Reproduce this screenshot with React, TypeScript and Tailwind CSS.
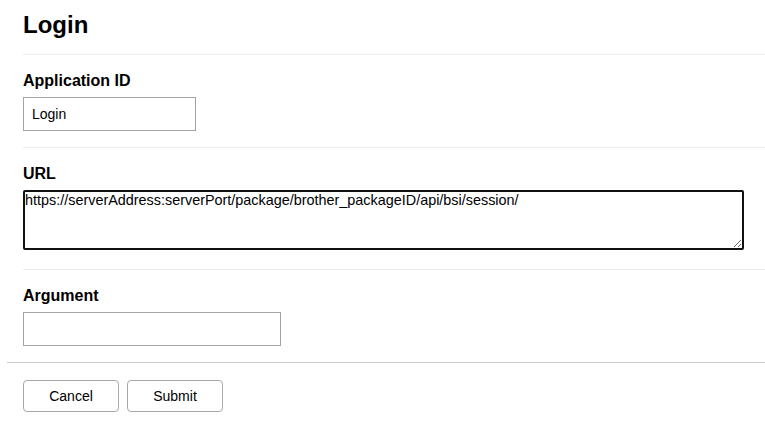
const font = { fontFamily: '"Liberation Sans", Arial, sans-serif' };

function Field({ label, children }: { label: string; children: React.ReactNode }) {
  return (
    <section className="border-t border-[#ececec] pt-4 pb-4">
      <h2 className="text-base font-bold leading-5 text-black">{label}</h2>
      <div className="mt-[6px]">{children}</div>
    </section>
  );
}

export default function App() {
  return (
    <main className="min-h-screen bg-white text-black" style={font}>
      <div className="pl-[23px]">
        <h1 className="pt-[11px] text-2xl font-bold leading-7">Login</h1>
        <div className="mt-[15px]">
          <Field label="Application ID">
            <input
              defaultValue="Login"
              className="block h-[34px] w-[173px] border border-[#a3a3a3] bg-white px-2 text-sm text-black outline-none"
              style={font}
            />
          </Field>
          <section className="border-t border-[#ececec] pt-4 pb-[19px]">
            <h2 className="text-base font-bold leading-5">URL</h2>
            <textarea
              defaultValue="https://serverAddress:serverPort/package/brother_packageID/api/bsi/session/"
              className="mt-[6px] block h-[60px] w-[721px] resize-y rounded-[2px] border-2 border-[#101010] p-0 text-[14.4px] leading-4 text-black outline-none"
              style={font}
            />
          </section>
          <section className="border-t border-[#ececec] pt-4 pb-4">
            <h2 className="text-base font-bold leading-5">Argument</h2>
            <input
              className="mt-[6px] block h-[34px] w-[258px] border border-[#a3a3a3] bg-white px-2 text-sm outline-none"
              style={font}
            />
          </section>
        </div>
      </div>
      <footer className="ml-[7px] border-t border-[#cfcfcf] pt-[17px] pl-4">
        <div className="flex gap-2">
          <button className="h-8 w-24 rounded border border-[#a8a8a8] bg-white text-sm text-black" style={font}>
            Cancel
          </button>
          <button className="h-8 w-24 rounded border border-[#a8a8a8] bg-white text-sm text-black" style={font}>
            Submit
          </button>
        </div>
      </footer>
    </main>
  );
}
